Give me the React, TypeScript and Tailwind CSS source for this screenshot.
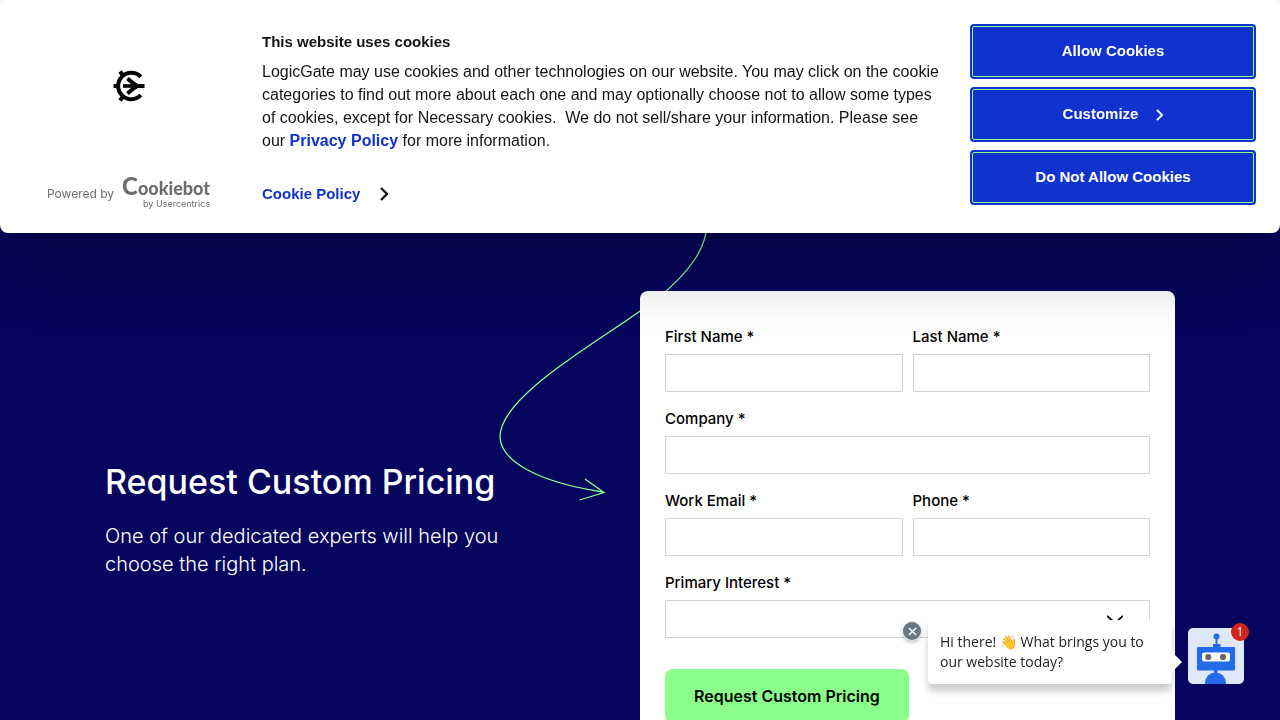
import type { InputHTMLAttributes, ReactNode } from "react";

function BrandMark() {
  return (
    <svg viewBox="0 0 32 32" className="size-8" aria-label="LogicGate" role="img" fill="none" stroke="#000">
      <path d="M27.800 6.800A13.200 13.200 0 1 0 27.800 25.200" strokeWidth="4" />
      <path d="M0.5 16H6M7 1.500L10.500 6M7 30.500L10.500 26" strokeWidth="4" />
      <path d="M10 16H24" strokeWidth="3.600" />
      <path d="M14.500 8.500L22 15M14.500 23.500L22 17" strokeWidth="4" />
      <path d="M19 10.500L25 14H31.500V18H25L19 21.500Z" fill="#000" stroke="none" />
    </svg>
  );
}

function Chevron({ className }: { className: string }) {
  return (
    <svg viewBox="0 0 8 14" className={className} fill="none" stroke="currentColor" strokeWidth="2.3" aria-hidden="true">
      <path d="M1 1L7 7L1 13" />
    </svg>
  );
}

function BannerButton({ children }: { children: ReactNode }) {
  return (
    <button
      type="button"
      className="h-[55px] w-full rounded-[4px] border-2 border-[#1032cf] bg-[#1032cf] text-[15px] font-bold text-white"
    >
      <span className="flex h-full items-center justify-center rounded-[2px] border border-[#8aff8a]">{children}</span>
    </button>
  );
}

function CookieBanner() {
  return (
    <section
      aria-label="Cookie consent"
      className="fixed inset-x-0 top-0 z-20 flex h-[233px] rounded-lg bg-white px-6 pt-6 font-['Liberation_Sans',sans-serif] text-[#141414] shadow-[0_32px_68px_rgba(0,0,0,0.3)]"
    >
      <div className="flex w-[238px] shrink-0 flex-col justify-between pb-6">
        <div className="flex w-[210px] justify-center pt-[46px]">
          <BrandMark />
        </div>
        <a href="#cookiebot" className="ml-[23px] flex items-start gap-2 font-[Inter,sans-serif] text-[#6d6d6d]">
          <span className="mt-[12px] text-[12px] leading-[14px]">Powered by</span>
          <span className="flex flex-col items-end">
            <span className="flex items-baseline font-[Lato,sans-serif] leading-[22px] font-black">
              <span className="text-[24px] leading-[22px]">C</span>
              <span className="text-[18px] leading-[22px]">ookiebot</span>
            </span>
            <span className="text-[9px] leading-[10px]">by Usercentrics</span>
          </span>
        </a>
      </div>
      <div className="min-w-0 flex-1 pt-2 pr-[27px]">
        <h2 className="text-[15px] leading-5 font-bold">This website uses cookies</h2>
        <p className="mt-2 text-[16px] leading-[23px]">
          LogicGate may use cookies and other technologies on our website. You may click on the cookie categories to
          find out more about each one and may optionally choose not to allow some types of cookies, except for
          Necessary cookies.&nbsp; We do not sell/share your information. Please see our{" "}
          <a href="#privacy" className="font-bold text-[#1032cf]">
            Privacy Policy
          </a>{" "}
          for more information.
        </p>
        <a href="#cookie-policy" className="mt-8 inline-flex items-center gap-5 text-[15px] leading-5 font-bold text-[#1032cf]">
          Cookie Policy
          <Chevron className="h-[14px] w-2 text-[#141414]" />
        </a>
      </div>
      <div className="flex w-[286px] shrink-0 flex-col gap-2">
        <BannerButton>Allow Cookies</BannerButton>
        <BannerButton>
          <span className="flex items-center gap-[18px]">
            Customize
            <Chevron className="h-3 w-[7px]" />
          </span>
        </BannerButton>
        <BannerButton>Do Not Allow Cookies</BannerButton>
      </div>
    </section>
  );
}

function Field({ id, label, ...rest }: { id: string; label: string } & InputHTMLAttributes<HTMLInputElement>) {
  return (
    <div className="flex flex-col gap-[7px]">
      <label htmlFor={id} className="text-[15px] leading-5 font-medium">
        {label} *
      </label>
      <input id={id} className="h-[38px] w-full border border-[#d3d3d3] bg-transparent px-3" {...rest} />
    </div>
  );
}

function PricingForm() {
  return (
    <form className="rounded-lg bg-white px-[25px] pt-9 pb-10 text-black">
      <div className="flex flex-col gap-[17px]">
        <div className="grid grid-cols-2 gap-[10px]">
          <Field id="first-name" label="First Name" />
          <Field id="last-name" label="Last Name" />
        </div>
        <Field id="company" label="Company" />
        <div className="grid grid-cols-2 gap-[10px]">
          <Field id="email" label="Work Email" type="email" />
          <Field id="phone" label="Phone" type="tel" />
        </div>
        <div className="flex flex-col gap-[7px]">
          <label htmlFor="interest" className="text-[15px] leading-5 font-medium">
            Primary Interest *
          </label>
          <div className="relative">
            <select id="interest" className="h-[38px] w-full appearance-none border border-[#d3d3d3] bg-transparent px-3">
              <option value=""></option>
            </select>
            <svg
              viewBox="0 0 16 9"
              className="pointer-events-none absolute top-[15px] right-[27px] h-[9px] w-4"
              fill="none"
              stroke="#000"
              strokeWidth="1.8"
              aria-hidden="true"
            >
              <path d="M0 0.8L8 8L16 0.8" />
            </svg>
          </div>
        </div>
      </div>
      <button type="submit" className="mt-[31px] h-[54px] rounded-lg bg-[#8aff8a] px-[29px] text-[16px] font-semibold">
        Request Custom Pricing
      </button>
    </form>
  );
}

function ChatWidget() {
  return (
    <aside className="fixed right-9 bottom-9 z-10 flex items-end gap-4 font-['Open_Sans',sans-serif]">
      <button
        type="button"
        aria-label="Dismiss message"
        className="mb-[44px] -mr-[9px] flex size-[18px] items-center justify-center rounded-full bg-[#687782] shadow-[0_0_0_1px_#e6e9eb,0_2px_5px_rgba(0,0,0,0.3)]"
      >
        <svg viewBox="0 0 10 10" className="size-[9px]" stroke="#fff" strokeWidth="1.6" aria-hidden="true">
          <path d="M1 1L9 9M9 1L1 9" />
        </svg>
      </button>
      <div className="relative w-[244px] rounded-b-[4px] bg-white px-3 py-3 text-[14px] leading-5 text-[#222] shadow-[0_7px_7px_rgba(0,0,0,0.2)]">
        Hi there! 👋 What brings you to our website today?
        <svg viewBox="0 0 10 20" className="absolute top-8 -right-[10px] h-5 w-[10px]" aria-hidden="true">
          <path d="M0 0L10 10L0 20Z" fill="#fff" />
        </svg>
      </div>
      <button type="button" aria-label="Open chat" className="relative size-14">
        <svg viewBox="0 0 56 56" className="size-14 rounded-[5px]" aria-hidden="true">
          <rect width="56" height="56" fill="#dfe8fb" />
          <g fill="#246be9">
            <circle cx="28.5" cy="8.5" r="3" />
            <rect x="27.5" y="9" width="2" height="9" />
            <rect x="25" y="16" width="7.5" height="4" />
            <rect x="9" y="19" width="38" height="23.5" rx="1" />
            <rect x="26" y="41" width="3.5" height="5" />
            <circle cx="27.5" cy="55" r="10.5" />
          </g>
          <rect x="14" y="24.5" width="28" height="9" rx="2" fill="#fff" />
          <circle cx="20.3" cy="29" r="3.1" fill="#666" />
          <circle cx="35" cy="29" r="3.1" fill="#666" />
        </svg>
        <span className="absolute -top-[5px] -right-[5px] flex size-[18px] items-center justify-center rounded-full bg-[#d1241c] text-[12px] leading-none text-white">
          1
        </span>
      </button>
    </aside>
  );
}

export default function App() {
  return (
    <div className="h-screen overflow-y-auto bg-[#06065e] font-[Inter,sans-serif] [scrollbar-width:none]">
      <CookieBanner />
      <header className="h-20 bg-white" />
      <main className="relative mx-auto grid w-full max-w-[1070px] grid-cols-2 pt-[211px] pb-16">
        <svg
          viewBox="0 0 220 300"
          className="absolute top-[130px] left-[390px] h-[300px] w-[220px]"
          fill="none"
          stroke="#8aff8a"
          strokeWidth="1.3"
          aria-hidden="true"
        >
          <path d="M211.500 10C214 38 192 64 163 88C115 126 5 183 5 227C6 251 42 272 108 282" />
          <path d="M90 269L109 282.500L84.500 290" />
        </svg>
        <div className="pt-[170px] text-white">
          <h1 className="text-[34px] leading-[42px] font-medium">Request Custom Pricing</h1>
          <p className="mt-[19px] max-w-[430px] text-[20px] leading-7 font-light">
            One of our dedicated experts will help you choose the right plan.
          </p>
        </div>
        <div className="relative">
          <PricingForm />
        </div>
      </main>
      <ChatWidget />
    </div>
  );
}
